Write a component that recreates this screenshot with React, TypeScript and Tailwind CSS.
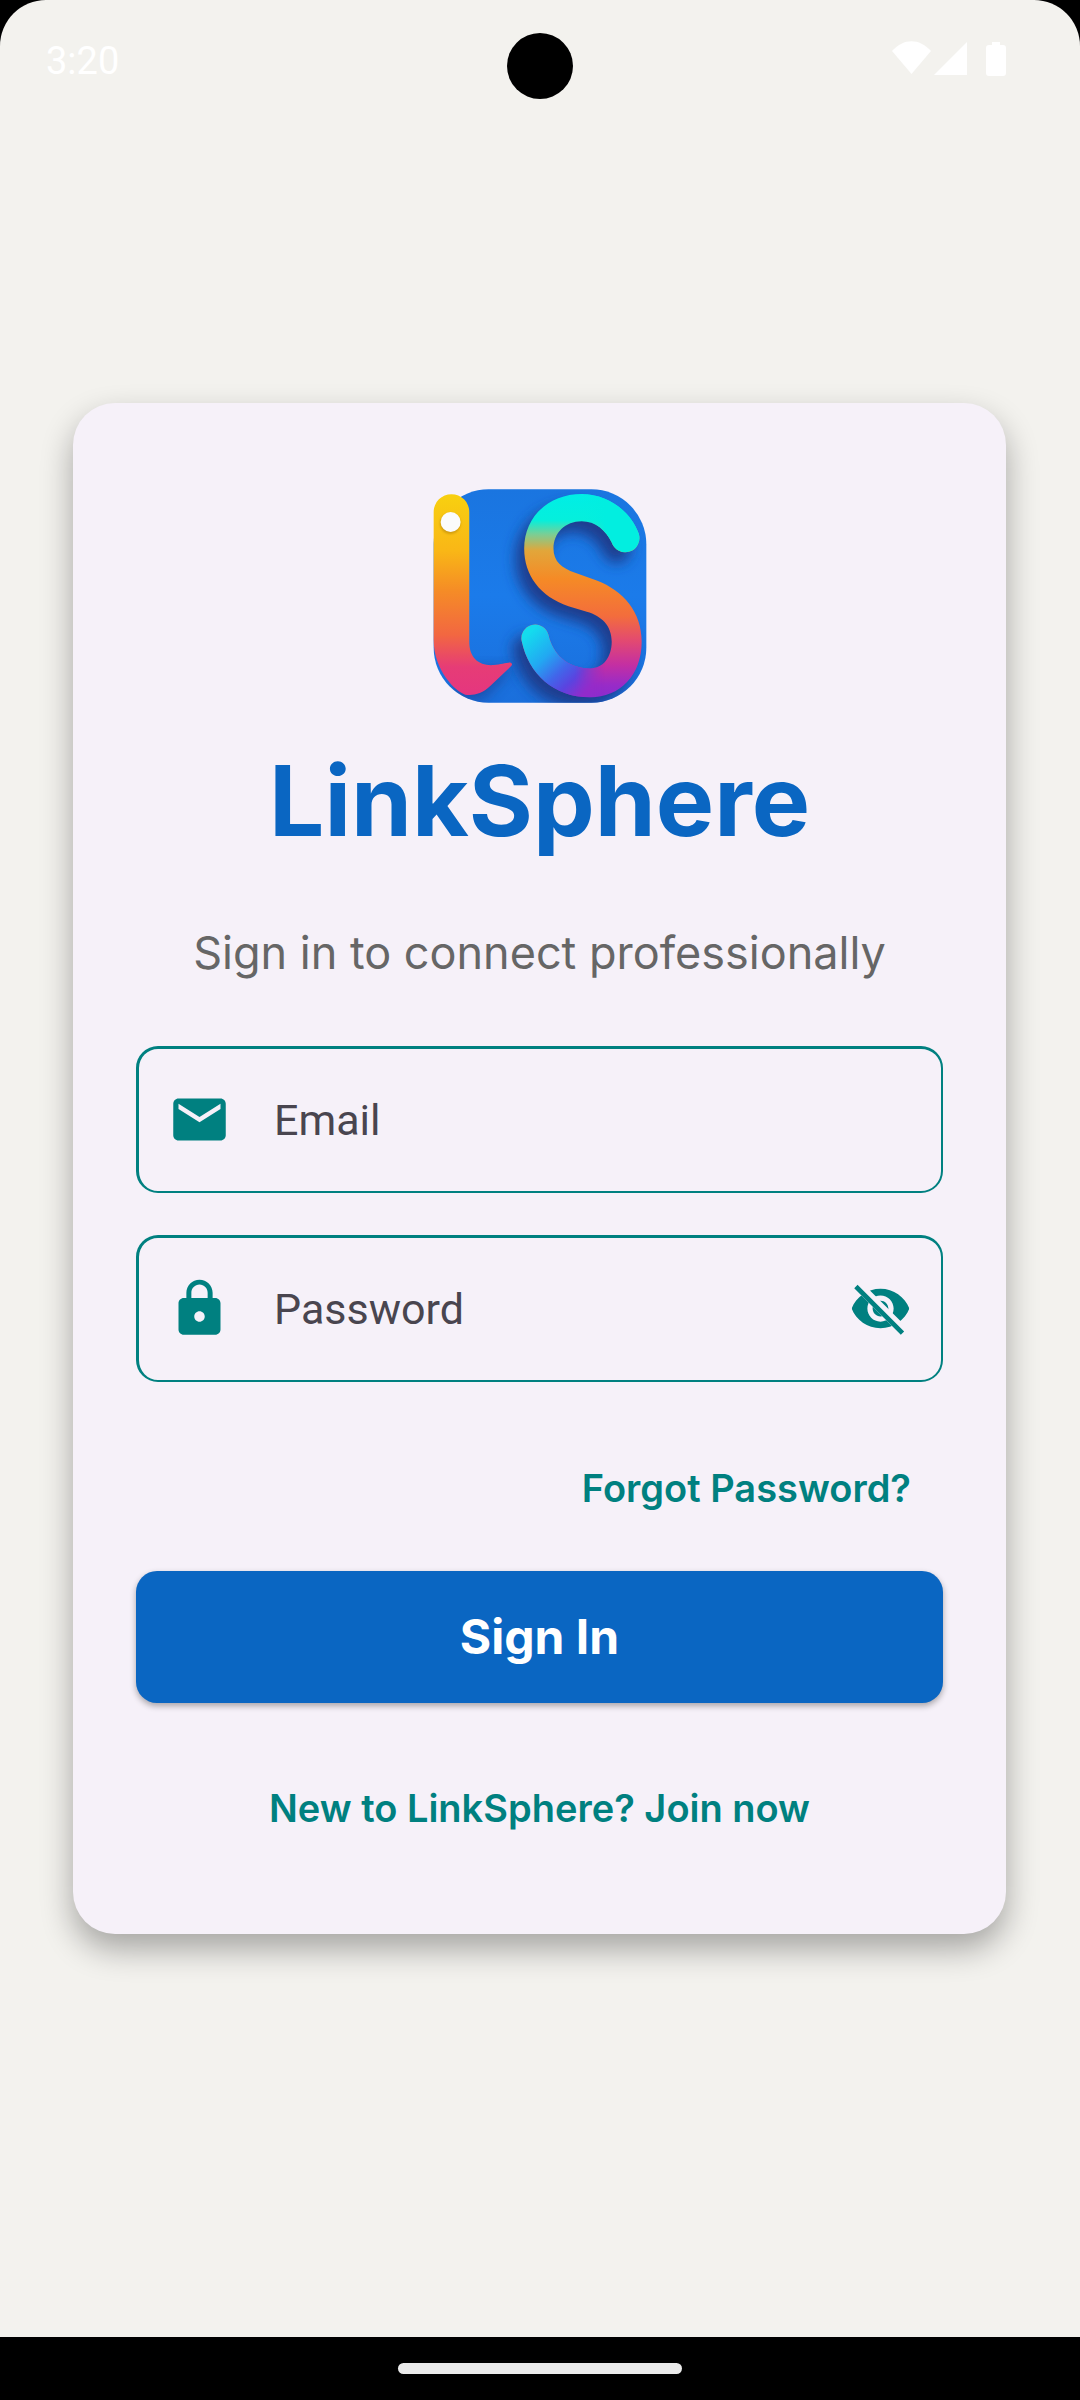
import { useState } from "react";
import { MdEmail, MdLock } from "react-icons/md";

function StatusIcons() {
  return (
    <svg aria-hidden="true" viewBox="0 0 116 36" className="h-9 w-[116px] fill-white">
      <path d="M0 10C12-3 27-3 39 10L19.500 33Z" />
      <path d="M42 34L75 1V34Z" />
      <path d="M100 1h8v3h3a3 3 0 0 1 3 3v25a3 3 0 0 1-3 3H97a3 3 0 0 1-3-3V7a3 3 0 0 1 3-3h3Z" />
    </svg>
  );
}

function StatusBar() {
  return (
    <header className="relative flex h-[118px] shrink-0 items-start justify-between pr-[72px] pl-[46px]">
      <time className="mt-[38px] text-[38px] leading-[46px] text-white">3:20</time>
      <span className="absolute top-[33px] left-1/2 size-[66px] -translate-x-1/2 rounded-full bg-black" />
      <div className="mt-[41px]">
        <StatusIcons />
      </div>
    </header>
  );
}

const RIBBON_PATH =
  "M580 217C562 180 532 153 490 153C440 153 405 188 405 235C405 274 430 294 470 308L535 331C615 362 670 425 670 515C670 615 605 682 515 682C405 682 330 610 310 515A41 41 0 0 1 390 494C402 550 445 595 515 595C555 595 580 560 580 515C580 467 550 438 505 425L450 408C365 380 317 315 317 235C317 140 390 71 490 71C570 71 638 125 661 190A42 42 0 0 1 580 217Z";
const STEM_PATH =
  "M45 125A53 53 0 0 1 152 125V515C152 565 182 588 225 585C248 583 260 578 275 577Q284 580 278 588L215 648C190 672 165 677 140 674C110 665 45 600 45 510Z";

function Logo() {
  return (
    <svg role="img" aria-label="LinkSphere logo" viewBox="44 56 641 643" className="size-[214px]">
      <defs>
        <linearGradient id="tile" x1="0" y1="0" x2="0" y2="1">
          <stop offset="0" stopColor="#1a75e0" />
          <stop offset="0.5" stopColor="#1b7bea" />
          <stop offset="1" stopColor="#1a6fdc" />
        </linearGradient>
        <linearGradient id="stem" gradientUnits="userSpaceOnUse" x1="0" y1="72" x2="0" y2="675">
          <stop offset="0" stopColor="#f8d010" />
          <stop offset="0.28" stopColor="#f9b716" />
          <stop offset="0.48" stopColor="#f58c26" />
          <stop offset="0.7" stopColor="#f26741" />
          <stop offset="0.86" stopColor="#e63c76" />
          <stop offset="1" stopColor="#e5367f" />
        </linearGradient>
        <linearGradient id="curve" gradientUnits="userSpaceOnUse" x1="0" y1="70" x2="0" y2="682">
          <stop offset="0" stopColor="#00eee6" />
          <stop offset="0.13" stopColor="#05efdc" />
          <stop offset="0.2" stopColor="#7bce94" />
          <stop offset="0.28" stopColor="#e2a63a" />
          <stop offset="0.42" stopColor="#f58a26" />
          <stop offset="0.6" stopColor="#f36d3c" />
          <stop offset="0.72" stopColor="#e34a70" />
          <stop offset="0.84" stopColor="#c42fa2" />
          <stop offset="0.94" stopColor="#982bc8" />
          <stop offset="1" stopColor="#8a2cce" />
        </linearGradient>
        <linearGradient id="tip" gradientUnits="userSpaceOnUse" x1="490" y1="0" x2="560" y2="0">
          <stop offset="0" stopColor="#02eee0" stopOpacity="0" />
          <stop offset="1" stopColor="#02eee0" />
        </linearGradient>
        <linearGradient id="tail" gradientUnits="userSpaceOnUse" x1="345" y1="475" x2="515" y2="655">
          <stop offset="0" stopColor="#14dcee" />
          <stop offset="0.35" stopColor="#22a8f2" />
          <stop offset="0.6" stopColor="#4166ea" />
          <stop offset="0.78" stopColor="#5a44e0" />
          <stop offset="1" stopColor="#942bca" />
        </linearGradient>
        <linearGradient id="tailFade" gradientUnits="userSpaceOnUse" x1="470" y1="0" x2="560" y2="0">
          <stop offset="0" stopColor="#fff" />
          <stop offset="1" stopColor="#000" />
        </linearGradient>
        <clipPath id="tileClip">
          <rect x="45" y="57" width="639" height="641" rx="165" />
        </clipPath>
        <clipPath id="tipClip">
          <rect x="490" y="60" width="200" height="200" />
        </clipPath>
        <mask id="tailMask" maskUnits="userSpaceOnUse" x="290" y="440" width="270" height="260">
          <rect x="290" y="440" width="270" height="260" fill="url(#tailFade)" />
        </mask>
        <clipPath id="tailClip">
          <path d="M290 440H420L480 560H560V700H290Z" />
        </clipPath>
        <filter id="soft" x="-30%" y="-30%" width="160%" height="160%">
          <feGaussianBlur stdDeviation="20" />
        </filter>
        <filter id="dotSoft" x="-50%" y="-50%" width="200%" height="200%">
          <feGaussianBlur stdDeviation="3" />
        </filter>
      </defs>
      <rect x="45" y="57" width="639" height="641" rx="165" fill="url(#tile)" />
      <g clipPath="url(#tileClip)">
        <path d={RIBBON_PATH} fill="#1c3c8e" filter="url(#soft)" transform="translate(-26 32)" />
        <path d="M120 600L285 590L190 690H110Z" fill="#1c3f92" opacity="0.7" filter="url(#soft)" />
      </g>
      <path d={RIBBON_PATH} fill="url(#curve)" />
      <path d={RIBBON_PATH} fill="url(#tip)" clipPath="url(#tipClip)" />
      <g mask="url(#tailMask)">
        <path d={RIBBON_PATH} fill="url(#tail)" clipPath="url(#tailClip)" />
      </g>
      <path d={STEM_PATH} fill="url(#stem)" />
      <circle cx="95" cy="160" r="31" fill="#a87808" opacity="0.5" filter="url(#dotSoft)" />
      <circle cx="96" cy="155" r="30" fill="#fbfbfb" />
    </svg>
  );
}

function EyeIcon({ struck }: { struck: boolean }) {
  return (
    <svg aria-hidden="true" viewBox="0 0 24 24" className="size-[63px]">
      <defs>
        <clipPath id="strike">
          <path d="M2 4.27L19.73 22L22.27 19.46L4.54 1.73V1H23V23H1V4.27Z" />
        </clipPath>
      </defs>
      <path
        fill="currentColor"
        clipPath={struck ? "url(#strike)" : undefined}
        d="M12 4.5C7 4.5 2.73 7.61 1 12c1.73 4.39 6 7.5 11 7.5s9.27-3.11 11-7.5c-1.73-4.39-6-7.5-11-7.5zM12 17c-2.760 0-5-2.240-5-5s2.240-5 5-5 5 2.240 5 5-2.240 5-5 5zm0-8c-1.660 0-3 1.340-3 3s1.340 3 3 3 3-1.340 3-3-1.340-3-3-3z"
      />
      {struck && (
        <path d="M3.270 4.270L19.740 20.740" stroke="currentColor" strokeWidth="1.8" strokeLinecap="square" />
      )}
    </svg>
  );
}

const fieldClass =
  "flex h-[147px] items-center rounded-[22px] border-t-3 border-r-2 border-b-2 border-l-3 border-[#008080] px-[29px] pb-px text-[#008080]";
const inputClass =
  "ml-[43px] min-w-0 flex-1 bg-transparent text-[43px] leading-[56px] text-[#49454f] outline-none placeholder:text-[#49454f] placeholder:opacity-100";

export default function App() {
  const [hidden, setHidden] = useState(true);

  return (
    <div className="bg-black font-[Roboto,sans-serif]">
      <div className="flex min-h-screen flex-col">
        <div className="flex flex-1 flex-col rounded-t-[46px] bg-[#f3f2ee]">
          <StatusBar />
          <main className="flex flex-1 flex-col justify-center pr-[74px] pb-[118px] pl-[73px]">
            <form
              onSubmit={(e) => e.preventDefault()}
              className="flex flex-col rounded-[42px] bg-[#f6f1f9] px-[63px] pt-[86px] pb-[102px] font-[Inter,sans-serif] shadow-[0_15px_32px_rgba(0,0,0,0.32)]"
            >
              <div className="flex justify-center">
                <Logo />
              </div>
              <h1 className="mt-[38px] text-center text-[98px] leading-[120px] font-bold text-[#0a66c2]">
                LinkSphere
              </h1>
              <p className="mt-[62px] text-center text-[45px] leading-[60px] text-[#666666]">
                Sign in to connect professionally
              </p>

              <div className="mt-[63px] flex flex-col gap-[42px] font-[Roboto,sans-serif]">
                <div className={fieldClass}>
                  <label htmlFor="email" className="shrink-0" aria-label="Email">
                    <MdEmail className="size-[63px]" />
                  </label>
                  <input id="email" type="email" placeholder="Email" className={inputClass} />
                </div>
                <div className={fieldClass}>
                  <label htmlFor="password" className="shrink-0" aria-label="Password">
                    <MdLock className="size-[63px]" />
                  </label>
                  <input
                    id="password"
                    type={hidden ? "password" : "text"}
                    placeholder="Password"
                    className={inputClass}
                  />
                  <button
                    type="button"
                    aria-label={hidden ? "Show password" : "Hide password"}
                    onClick={() => setHidden(!hidden)}
                    className="shrink-0"
                  >
                    <EyeIcon struck={hidden} />
                  </button>
                </div>
              </div>

              <div className="mt-[82px] flex justify-end pr-8">
                <a href="#forgot" className="text-[38px] leading-[48px] font-semibold text-[#008080]">
                  Forgot Password?
                </a>
              </div>
              <button
                type="submit"
                className="mt-[59px] h-[132px] rounded-[21px] bg-[#0a66c2] text-[48px] leading-[60px] font-bold text-white shadow-[0_3px_6px_rgba(0,0,0,0.32)]"
              >
                Sign In
              </button>
              <a
                href="#join"
                className="mt-[81px] self-center text-[38px] leading-[48px] font-semibold text-[#008080]"
              >
                New to LinkSphere? Join now
              </a>
            </form>
          </main>
        </div>
        <footer className="flex h-[63px] shrink-0 items-center justify-center">
          <span className="h-[11px] w-[284px] rounded-full bg-[#ebebeb]" />
        </footer>
      </div>
    </div>
  );
}
